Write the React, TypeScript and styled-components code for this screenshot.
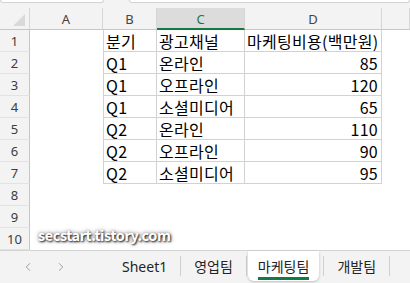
import React from "react";
import styled, { createGlobalStyle } from "styled-components";
import { ChevronLeft, ChevronRight } from "lucide-react";

const GlobalStyle = createGlobalStyle`
  html, body {
    margin: 0;
    padding: 0;
    background: #ffffff;
  }
  body {
    font-family: "Noto Sans CJK KR", "Noto Sans", sans-serif;
  }
`;

const columns = ["A", "B", "C", "D", ""];

const data = [
	["분기", "광고채널", "마케팅비용(백만원)"],
	["Q1", "온라인", "85"],
	["Q1", "오프라인", "120"],
	["Q1", "소셜미디어", "65"],
	["Q2", "온라인", "110"],
	["Q2", "오프라인", "90"],
	["Q2", "소셜미디어", "95"],
];

const sheets = ["Sheet1", "영업팀", "마케팅팀", "개발팀"];

const App = () => {
	const rowCount = 10;

	return (
		<Window>
			<GlobalStyle />
			<TopStrip>
				<NameBox />
				<FormulaBox />
			</TopStrip>

			<Sheet>
				<Corner>
					<svg width='13' height='13' viewBox='0 0 13 13'>
						<polygon points='12,0 12,12 0,12' fill='#d9d9d9' />
					</svg>
				</Corner>
				{columns.map((c) => (
					<ColHead key={c || "E"} $selected={c === "C"}>
						{c}
					</ColHead>
				))}

				{Array.from({ length: rowCount }).map((_, r) => {
					const row = data[r];
					return (
						<React.Fragment key={r}>
							<RowHead>{r + 1}</RowHead>
							<Cell />
							<Cell $table={!!row} $first>
								{row ? row[0] : ""}
							</Cell>
							<Cell $table={!!row}>{row ? row[1] : ""}</Cell>
							<Cell $table={!!row} $right={!!row && r > 0}>
								{row ? row[2] : ""}
							</Cell>
							<Cell />
						</React.Fragment>
					);
				})}
			</Sheet>

			<TabBar>
				<Nav>
					<ChevronLeft size={14} strokeWidth={1.4} color='#8c8c8c' />
					<ChevronRight size={14} strokeWidth={1.4} color='#8c8c8c' />
				</Nav>
				{sheets.map((s) => (
					<React.Fragment key={s}>
						{s === "마케팅팀" ? (
							<ActiveTab>
								<ActiveLabel>{s}</ActiveLabel>
							</ActiveTab>
						) : (
							<Tab>{s}</Tab>
						)}
						<Divider />
					</React.Fragment>
				))}
			</TabBar>

			<Watermark>secstart.tistory.com</Watermark>
		</Window>
	);
};

export default App;

const Window = styled.div`
	position: relative;
	width: 410px;
	height: 283px;
	overflow: hidden;
	display: flex;
	flex-direction: column;
	background: #ffffff;
`;

const TopStrip = styled.div`
	height: 8px;
	background: #f3f3f3;
	display: flex;
	gap: 25px;
	align-items: flex-start;
`;

const NameBox = styled.div`
	width: 102px;
	height: 2px;
	background: #ffffff;
	border: 1px solid #d4d4d4;
	border-top: none;
	border-radius: 0 0 3px 3px;
`;

const FormulaBox = styled(NameBox)`
	flex: 1;
`;

const Sheet = styled.div`
	display: grid;
	grid-template-columns: 30px 73px 54px 88px 137px 1fr;
	grid-template-rows: repeat(11, 22px);
	height: 242px;
`;

const Corner = styled.div`
	background: #f3f3f3;
	border-right: 1px solid #d6d6d6;
	border-bottom: 1px solid #c6c6c6;
	display: flex;
	align-items: flex-end;
	justify-content: flex-end;
	padding: 0 3px 2px 0;
	box-sizing: border-box;
`;

const ColHead = styled.div<{ $selected?: boolean }>`
	box-sizing: border-box;
	background: ${(p) => (p.$selected ? "#dcdcdc" : "#f3f3f3")};
	border-right: 1px solid #d6d6d6;
	border-bottom: ${(p) => (p.$selected ? "2px solid #107c41" : "1px solid #c6c6c6")};
	color: ${(p) => (p.$selected ? "#107c41" : "#444444")};
	font-family: "Noto Sans", sans-serif;
	font-size: 13px;
	display: flex;
	align-items: center;
	justify-content: center;
	padding-top: 1px;
`;

const RowHead = styled.div`
	box-sizing: border-box;
	background: #f3f3f3;
	border-right: 1px solid #c6c6c6;
	border-bottom: 1px solid #e2e2e2;
	color: #3c3c3c;
	font-family: "Noto Sans", sans-serif;
	font-size: 13px;
	display: flex;
	align-items: center;
	justify-content: center;
`;

const Cell = styled.div<{ $table?: boolean; $first?: boolean; $right?: boolean }>`
	box-sizing: border-box;
	background: #ffffff;
	color: #000000;
	font-size: 16px;
	letter-spacing: 0.3px;
	white-space: nowrap;
	overflow: hidden;
	display: flex;
	align-items: center;
	justify-content: ${(p) => (p.$right ? "flex-end" : "flex-start")};
	padding: 0 3px 0 2px;
	border-right: ${(p) => (p.$table ? "1px solid #d2d2d2" : "none")};
	border-bottom: ${(p) => (p.$table ? "1px solid #d2d2d2" : "none")};
	border-left: ${(p) => (p.$table && p.$first ? "1px solid #d2d2d2" : "none")};
`;

const TabBar = styled.div`
	flex: 1;
	background: #f3f3f3;
	border-top: 1px solid #d4d4d4;
	display: flex;
	align-items: stretch;
	font-family: "Noto Sans", "Noto Sans CJK KR", sans-serif;
	font-size: 14px;
	color: #242424;
`;

const Nav = styled.div`
	width: 109px;
	box-sizing: border-box;
	padding-left: 21px;
	display: flex;
	align-items: center;
	gap: 19px;
`;

const Tab = styled.div`
	padding: 0 13px;
	display: flex;
	align-items: center;
	padding-bottom: 2px;
`;

const ActiveTab = styled.div`
	background: #ffffff;
	margin: 0 4px 2px 1px;
	padding: 0 10px;
	border-radius: 0 0 6px 6px;
	box-shadow: 0 1px 3px rgba(0, 0, 0, 0.22);
	display: flex;
	align-items: center;
`;

const ActiveLabel = styled.span`
	padding-top: 5px;
	padding-bottom: 1px;
	border-bottom: 3px solid #107c41;
	line-height: 18px;
`;

const Divider = styled.div`
	width: 1px;
	height: 20px;
	background: #cfcfcf;
	align-self: center;
	margin-bottom: 2px;
`;

const Watermark = styled.div`
	position: absolute;
	left: 38px;
	top: 224px;
	font-family: "Noto Sans CJK KR", sans-serif;
	font-weight: 700;
	font-size: 14.5px;
	letter-spacing: -0.45px;
	color: #ffffff;
	text-shadow: 1px 1px 2px rgba(0, 0, 0, 0.85), 0 0 4px rgba(0, 0, 0, 0.6);
	white-space: nowrap;
`;
